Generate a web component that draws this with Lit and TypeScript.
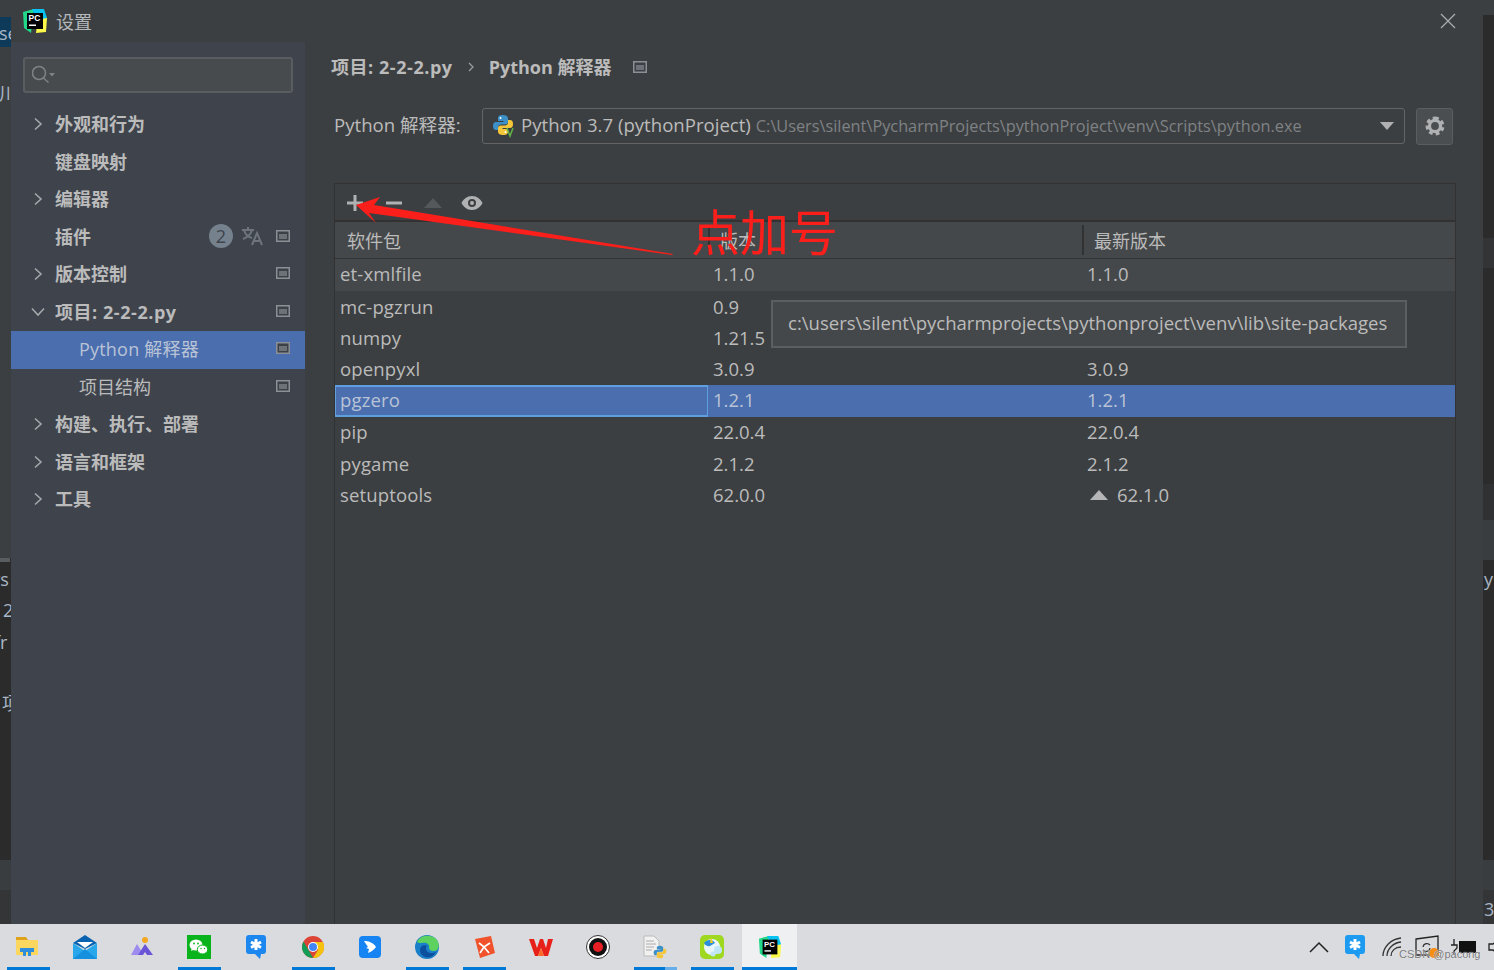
import { LitElement, css, html, svg } from 'lit';
import { customElement } from 'lit/decorators.js';
import { classMap } from 'lit/directives/class-map.js';

const pageIcon = html`<svg class="page-ic" width="14" height="12" viewBox="0 0 14 12"><path fill="#8b9096" d="M0 0h14v12H0z"/><path fill="#3c4047" d="M1.500 1.500h11v9h-11z"/><path fill="#6d7279" d="M3 4h8v5H3z"/></svg>`;

const chevronRight = html`<svg class="chev" width="10" height="14" viewBox="0 0 10 14"><path d="M2 1.500 8 7l-6 5.500" fill="none" stroke="#a4a8ab" stroke-width="1.600"/></svg>`;
const chevronDown = html`<svg class="chev down" width="14" height="10" viewBox="0 0 14 10"><path d="M1 1.500 7 8l6-6.500" fill="none" stroke="#a4a8ab" stroke-width="1.600"/></svg>`;

const pcLogo = (size: number) => html`<svg width=${size} height=${size} viewBox="0 0 26 26">
  <path fill="#21d789" d="M1 4 12 1 9 25 2 20z"/>
  <path fill="#fcf84a" d="M14 25 24 24 25 10 16 8z"/>
  <path fill="#07c3f2" d="M10 1 22 1 25 10 15 12z"/>
  <path fill="#000" d="M5 5h16v16H5z"/>
  <path fill="#fff" d="M7 16.500h7v1.500H7z"/>
  <text x="6.500" y="13" font-family="Liberation Sans" font-size="8.500" font-weight="700" fill="#fff">PC</text>
</svg>`;

const pythonLogo = (size: number) => html`<svg width=${size} height=${size} viewBox="0 0 22 22">
  <path fill="#3c8fc7" d="M11 1C7 1 6 2.500 6 4.500V7h5.500v1H4C2 8 1 9.500 1 12s1 4 3 4h2v-2.500C6 11.500 7.500 10.500 9 10.500h4.500c1.300 0 2.500-1 2.500-2.500V4.500C16 2.500 14.500 1 11 1z"/>
  <path fill="#f4c63a" d="M11 21c4 0 5-1.500 5-3.500V15h-5.500v-1H18c2 0 3-1.500 3-4s-1-4-3-4h-2v2.500c0 2-1.500 3-3 3H8.500C7.200 11.500 6 12.500 6 14v3.500C6 19.500 7.500 21 11 21z"/>
  <circle cx="8.500" cy="4" r="1" fill="#fff"/>
  <circle cx="13.500" cy="18" r="1" fill="#fff"/>
</svg>`;

type TaskIcon = { icon: unknown; bar?: boolean; active?: boolean; split?: boolean };

const taskIcons: TaskIcon[] = [
  {
    bar: true,
    icon: html`<svg width="23" height="20" viewBox="0 0 23 20"><path fill="#e0a21b" d="M0 0h10l2 3H0z"/><path fill="#fbd75f" d="M0 3h22v15H0z"/><path fill="#2f8fdc" d="M4 11h14v4h-3v4h-3v-4h-2v4H7v-4H4z" /></svg>`,
  },
  {
    icon: html`<svg width="24" height="24" viewBox="0 0 24 24"><path fill="#0a63b0" d="M0 8 12 0l12 8-12 6z"/><path fill="#fff" d="M4 7h16l-8 6z"/><path fill="#28a8ea" d="M0 8l12 8 12-8v16H0z"/><path fill="#1490df" d="M0 24 12 14l12 10z"/></svg>`,
  },
  {
    icon: html`<svg width="24" height="20" viewBox="0 0 24 20"><circle cx="15" cy="3" r="3" fill="#f5a623"/><path fill="#9d8bee" d="M1 18 7 7l5 8-3 3z"/><path fill="#6a55d8" d="M8 18l7-11 8 11h-6l-2-3-2 3z"/></svg>`,
  },
  {
    bar: true,
    icon: html`<svg width="24" height="24" viewBox="0 0 24 24"><path fill="#09b31c" d="M0 0h24v24H0z"/><ellipse cx="9" cy="10" rx="6.500" ry="5.500" fill="#fff"/><path fill="#fff" d="M5 13l-1 3 4-2z"/><ellipse cx="15.500" cy="14.500" rx="5.200" ry="4.500" fill="#fff" stroke="#09b31c"/><circle cx="7" cy="8.500" r=".9" fill="#09b31c"/><circle cx="11" cy="8.500" r=".9" fill="#09b31c"/><circle cx="14" cy="13.500" r=".7" fill="#09b31c"/><circle cx="17.500" cy="13.500" r=".7" fill="#09b31c"/></svg>`,
  },
  {
    icon: html`<svg width="20" height="24" viewBox="0 0 20 24"><path fill="#1d87f0" d="M3 0h14a3 3 0 0 1 3 3v13a3 3 0 0 1-3 3h-2l-1 5-5-5H3a3 3 0 0 1-3-3V3a3 3 0 0 1 3-3z"/><path stroke="#fff" stroke-width="3" d="M10 4v11M5 7l10 5.500M15 7 5 12.500"/></svg>`,
  },
  {
    bar: true,
    icon: html`<svg width="22" height="22" viewBox="0 0 22 22"><circle cx="11" cy="11" r="11" fill="#db4437"/><path fill="#0f9d58" d="M1.500 5.500 7 15l4 7A11 11 0 0 1 1.500 5.500z"/><path fill="#f4c20d" d="M11 6h10a11 11 0 0 1-10 16l5-8z"/><circle cx="11" cy="11" r="5" fill="#fff"/><circle cx="11" cy="11" r="4" fill="#4285f4"/></svg>`,
  },
  {
    icon: html`<svg width="22" height="22" viewBox="0 0 22 22"><rect width="22" height="22" rx="4" fill="#1684f2"/><path fill="#fff" d="M5 5c4 0 9 1 12 6-2 3-5 5-8 6l1-4-3-1 2-1z"/></svg>`,
  },
  {
    bar: true,
    icon: html`<svg width="24" height="24" viewBox="0 0 24 24"><circle cx="12" cy="12" r="12" fill="#1a7fc9"/><path fill="#5ed25e" d="M2 7C5 0 14-1 20 3c4 3 5 9 2 12-3 2-8 1-8-2 1-4-3-6-7-5-2 0-4 0-5-1z"/><path fill="#0c4f9e" d="M5 15c0-4 4-6 7-4-2 2-1 6 3 7 2 0 4 0 6-1-3 6-10 7-14 3-1-1-2-3-2-5z"/></svg>`,
  },
  {
    bar: true,
    icon: html`<svg width="22" height="22" viewBox="0 0 22 22"><path fill="#f0532b" d="M2 3 18 0l4 17-15 5z"/><path stroke="#fff" stroke-width="1.700" fill="none" d="M6 7l5 4 6-4M11 11l-4 6M11 11l5 6"/></svg>`,
  },
  {
    icon: html`<svg width="24" height="18" viewBox="0 0 24 18"><path fill="#e8201a" d="M0 1h5l3 9 3-9h3l3 9 2-9h5l-5 17h-4l-3-8-3 8H6z"/><path fill="#ff6a2a" d="M9 18l3-8 3 8z"/></svg>`,
  },
  {
    icon: html`<svg width="24" height="24" viewBox="0 0 24 24"><circle cx="12" cy="12" r="11.500" fill="#fff" stroke="#333" stroke-width="1"/><circle cx="12" cy="12" r="9" fill="#111"/><circle cx="12" cy="12" r="5" fill="#e81e25"/></svg>`,
  },
  {
    bar: true,
    split: true,
    icon: html`<svg width="24" height="24" viewBox="0 0 24 24"><path fill="#f1f1f1" stroke="#bbb" d="M1 1h10l5 5v15H1z"/><path stroke="#aaa" d="M3 6h8M3 9h10M3 12h8M3 15h6"/><svg x="10" y="10" width="14" height="14" viewBox="0 0 22 22"><path fill="#3c8fc7" d="M11 1C7 1 6 2.500 6 4.500V7h5.500v1H4C2 8 1 9.500 1 12s1 4 3 4h2v-2.500C6 11.500 7.500 10.500 9 10.500h4.500c1.300 0 2.500-1 2.500-2.500V4.500C16 2.500 14.500 1 11 1z"/><path fill="#f4c63a" d="M11 21c4 0 5-1.500 5-3.500V15h-5.500v-1H18c2 0 3-1.500 3-4s-1-4-3-4h-2v2.500c0 2-1.500 3-3 3H8.500C7.200 11.500 6 12.500 6 14v3.500C6 19.500 7.500 21 11 21z"/></svg></svg>`,
  },
  {
    bar: true,
    icon: html`<svg width="24" height="24" viewBox="0 0 24 24"><rect width="24" height="24" rx="5" fill="#9fd821"/><circle cx="12" cy="12" r="8" fill="#e8f6fb"/><path fill="#2a8fd8" d="M4 8c3-4 9-4 11 0l-5 3c-2 1-5-1-6-3z"/><path fill="#f3c921" d="M11 2l2 6-3 0z"/><circle cx="18" cy="15" r="4" fill="#bfe6f4"/><circle cx="13" cy="19" r="2.500" fill="#bfe6f4"/></svg>`,
  },
  { bar: true, active: true, icon: pcLogo(24) },
];

const tree = [
  { label: '外观和行为', chevron: 'right', bold: true },
  { label: '键盘映射', bold: true },
  { label: '编辑器', chevron: 'right', bold: true },
  { label: '插件', bold: true, plugins: true, page: true },
  { label: '版本控制', chevron: 'right', bold: true, page: true },
  { label: '项目: 2-2-2.py', chevron: 'down', bold: true, page: true, wide: true },
  { label: 'Python 解释器', sub: true, selected: true, page: true },
  { label: '项目结构', sub: true, page: true },
  { label: '构建、执行、部署', chevron: 'right', bold: true },
  { label: '语言和框架', chevron: 'right', bold: true },
  { label: '工具', chevron: 'right', bold: true },
];

const packages = [
  ['et-xmlfile', '1.1.0', '1.1.0'],
  ['mc-pgzrun', '0.9', ''],
  ['numpy', '1.21.5', ''],
  ['openpyxl', '3.0.9', '3.0.9'],
  ['pgzero', '1.2.1', '1.2.1'],
  ['pip', '22.0.4', '22.0.4'],
  ['pygame', '2.1.2', '2.1.2'],
  ['setuptools', '62.0.0', '62.1.0'],
];

@customElement('app-root')
export class AppRoot extends LitElement {
  static styles = css`
    :host {
      display: block;
      width: 1494px;
      height: 970px;
      overflow: hidden;
      background: #2b2b2b;
      font-family: 'Open Sans', 'Noto Sans CJK SC', sans-serif;
      font-size: 18px;
      color: #bbbbbb;
    }
    .desk {
      display: grid;
      grid-template-columns: 11px 1472px 11px;
      height: 924px;
    }
    .strip {
      position: relative;
      overflow: hidden;
      color: #a9b7c6;
      background: linear-gradient(
        #3c3f41 0 558px,
        #2b2b2b 558px 860px,
        #3a3d3f 860px 890px,
        #333537 890px
      );
    }
    .strip span {
      position: absolute;
      line-height: 22px;
      white-space: nowrap;
    }
    .strip .tab {
      position: absolute;
      left: 0;
      top: 17px;
      width: 11px;
      height: 30px;
      background: #0d3a58;
    }
    .strip .rule {
      position: absolute;
      left: 0;
      top: 558px;
      width: 10px;
      height: 4px;
      background: #5a5d5f;
    }
    .strip.right {
      background: linear-gradient(
        #3c3f41 0 15px,
        #2b2b2b 15px 238px,
        #323436 238px 268px,
        #2b2b2b 268px 484px,
        #2f3133 484px 520px,
        #3a3d3f 520px 560px,
        #2b2b2b 560px 860px,
        #3a3d3f 860px 890px,
        #333537 890px
      );
    }
    .dialog {
      display: flex;
      flex-direction: column;
      background: #3c3f41;
    }
    .title {
      height: 42px;
      flex: none;
      display: flex;
      align-items: center;
      padding: 0 27px 0 11px;
      gap: 8px;
      font-size: 18px;
      color: #b4b8bb;
    }
    .title span {
      flex: 1;
      padding-bottom: 1px;
    }
    .body {
      flex: 1;
      display: flex;
      min-height: 0;
    }
    .side {
      width: 294px;
      flex: none;
      background: #3e434c;
      padding-top: 15px;
      box-sizing: border-box;
    }
    .search {
      height: 32px;
      margin: 0 12px 13px 12px;
      border: 2px solid #5a5d60;
      border-radius: 3px;
      background: #484b4d;
      display: flex;
      align-items: center;
      padding-left: 7px;
    }
    .item {
      height: 37.500px;
      display: flex;
      align-items: center;
      padding: 0 15px 3px 44px;
      box-sizing: border-box;
      position: relative;
      color: #bbbbbb;
    }
    .item.sub {
      padding-left: 68px;
    }
    .item.bold {
      font-weight: 700;
    }
    .item.selected {
      background: #4b6eaf;
      color: #b9c3d6;
    }
    .item.selected .label {
      letter-spacing: 0.2px;
    }
    .item .label {
      flex: 1;
    }
    .item .label.wide,
    .crumbs .wide {
      letter-spacing: 0.55px;
    }
    .item .chev {
      position: absolute;
      left: 22px;
      top: 11px;
    }
    .item .chev.down {
      left: 20px;
      top: 13px;
    }
    .badge {
      width: 24px;
      height: 24px;
      border-radius: 12px;
      background: #76818e;
      color: #3e434c;
      font-size: 18px;
      font-weight: 400;
      line-height: 24px;
      text-align: center;
      margin-right: 9px;
    }
    .lang {
      margin-right: 12px;
    }
    .page-ic {
      display: block;
      flex: none;
    }
    .main {
      flex: 1;
      min-width: 0;
      padding: 0 30px 0 29px;
      display: flex;
      flex-direction: column;
    }
    .crumbs {
      height: 49px;
      display: flex;
      align-items: center;
      font-weight: 700;
      margin-left: -3px;
      flex: none;
    }
    .crumbs > span {
      padding-bottom: 2px;
    }
    .crumbs .sep {
      margin: 0 15px 0 15px;
    }
    .crumbs .page-ic {
      margin-left: 22px;
    }
    .interp {
      display: flex;
      align-items: center;
      margin-top: 17px;
      height: 36px;
      flex: none;
    }
    .interp label {
      width: 148px;
      flex: none;
      font-size: 18.600px;
      padding-bottom: 5px;
    }
    .select {
      flex: 1;
      min-width: 0;
      height: 36px;
      box-sizing: border-box;
      border: 1px solid #646464;
      border-radius: 3px;
      display: flex;
      align-items: center;
      padding: 0 10px 0 9px;
      gap: 5px;
      white-space: nowrap;
      font-size: 18.600px;
    }
    .select .name {
      padding-bottom: 3px;
    }
    .select .path {
      font-size: 16.300px;
      color: #7f8285;
      flex: 1;
      overflow: hidden;
    }
    .gear {
      width: 37px;
      height: 37px;
      margin-left: 11px;
      box-sizing: border-box;
      flex: none;
      border: 1px solid #5a5e60;
      border-radius: 3px;
      background: #4a4e50;
      display: flex;
      align-items: center;
      justify-content: center;
    }
    .table {
      flex: 1;
      margin: 39px -3px 0 0;
      border: solid #323232;
      border-width: 1px 1px 0 1px;
      display: flex;
      flex-direction: column;
      min-height: 0;
    }
    .tools {
      height: 38px;
      flex: none;
      display: flex;
      align-items: center;
      padding: 2px 0 0 12px;
      gap: 13px;
      border-bottom: 2px solid #323232;
      box-sizing: border-box;
    }
    .row {
      display: grid;
      grid-template-columns: 373px 374px 1fr;
      height: 31.400px;
      line-height: 26px;
      font-size: 18.500px;
    }
    .row > div {
      padding-left: 5px;
      display: flex;
      align-items: center;
      gap: 8px;
      box-sizing: border-box;
      white-space: nowrap;
    }
    .row > div:first-child {
      letter-spacing: 0.15px;
    }
    .row.head {
      height: 37px;
      background: #45484a;
      border-bottom: 1px solid #323232;
      box-sizing: border-box;
      font-size: 18px;
    }
    .row.head > div {
      padding-left: 12px;
      padding-top: 1px;
      letter-spacing: 0;
    }
    .row.head > div + div {
      border-left: 2px solid #323232;
      margin: 3px 0;
      padding-left: 10px;
    }
    .row.hover {
      background: #45484a;
      height: 32px;
    }
    .row.hover > div {
      padding-bottom: 2px;
    }
    .row.picked {
      background: #4b6eaf;
      color: #b9c3d6;
    }
    .row.picked > div {
      padding-bottom: 1px;
    }
    .row.picked > div:first-child {
      border: solid #5f9fe0;
      border-width: 2px 1px;
      padding: 0 0 1px 4px;
    }
    .up {
      margin-left: 2px;
    }
    .tip {
      position: absolute;
      left: 771px;
      top: 300px;
      width: 636px;
      height: 48px;
      box-sizing: border-box;
      border: 2px solid #5c5e60;
      background: #45484a;
      color: #bbbbbb;
      font-size: 18.550px;
      line-height: 42px;
      padding-left: 15px;
      white-space: nowrap;
    }
    .note {
      position: absolute;
      left: 691px;
      top: 199px;
      font-size: 49px;
      line-height: 62px;
      color: #fb1f1b;
      font-family: 'Noto Sans CJK SC', sans-serif;
      font-weight: 400;
      white-space: nowrap;
    }
    .arrow {
      position: absolute;
      left: 350px;
      top: 190px;
      pointer-events: none;
    }
    .task {
      height: 46px;
      background: #dadbde;
      display: flex;
      position: relative;
    }
    .apps {
      display: flex;
      flex: 1;
    }
    .app {
      width: 57px;
      height: 46px;
      display: flex;
      align-items: center;
      justify-content: center;
      position: relative;
      padding: 0 2px 1px 0;
      box-sizing: border-box;
    }
    .app.bar::after {
      content: '';
      position: absolute;
      left: 7px;
      right: 7px;
      bottom: 0;
      height: 3px;
      background: #0078d7;
    }
    .app.split::before {
      content: '';
      position: absolute;
      right: 7px;
      width: 12px;
      bottom: 0;
      height: 3px;
      background: #66aeea;
      z-index: 1;
    }
    .app.active {
      background: #eff0f1;
      width: 55px;
      margin-left: 1px;
      padding-right: 0;
    }
    .app.active::after {
      left: 0;
      right: 0;
    }
    .tray {
      display: flex;
      align-items: center;
      width: 187px;
      flex: none;
      padding-left: 2px;
      box-sizing: border-box;
      overflow: hidden;
    }
    .tray svg {
      flex: none;
    }
    .t-blue {
      margin-left: 16px;
    }
    .t-wifi {
      margin-left: 17px;
    }
    .t-screen {
      margin-left: 13px;
    }
    .t-batt {
      margin-left: 11px;
    }
    .t-vol {
      margin-left: 12px;
    }
    .mark {
      position: absolute;
      left: 1399px;
      top: 22px;
      font-size: 11px;
      line-height: 16px;
      color: #77787b;
      font-family: 'Liberation Sans', sans-serif;
      white-space: nowrap;
      text-shadow: 0 0 1px #fff;
    }
    .dot {
      position: absolute;
      left: 1429px;
      top: 24px;
      width: 10px;
      height: 10px;
      border-radius: 5px;
      background: #f78d12;
    }
  `;

  render() {
    return html`
      <div class="desk">
        <div class="strip">
          <div class="tab"></div>
          <span style="left:-1px;top:22px">se</span>
          <span style="left:-1px;top:82px">川台</span>
          <div class="rule"></div>
          <span style="left:-7px;top:568px">rs</span>
          <span style="left:3px;top:599px">2</span>
          <span style="left:-6px;top:631px">fr</span>
          <span style="left:2px;top:692px">项</span>
        </div>
        ${this.renderDialog()}
        <div class="strip right">
          <span style="left:1px;top:568px">y</span>
          <span style="left:1px;top:898px">3</span>
        </div>
      </div>
      ${this.renderTaskbar()}
      <div class="tip">c:\\users\\silent\\pycharmprojects\\pythonproject\\venv\\lib\\site-packages</div>
      <svg class="arrow" width="330" height="70" viewBox="0 0 330 70">
        <path fill="#fb1f1b" d="M6 15 30 7l-6 8 299 49-1 1-303-42 7 10z"/>
      </svg>
      <div class="note">点加号</div>
    `;
  }

  renderDialog() {
    return html`
      <div class="dialog">
        <div class="title">
          ${pcLogo(26)}
          <span>设置</span>
          <svg width="16" height="16" viewBox="0 0 16 16"><path d="M1 1l14 14M15 1 1 15" stroke="#a9adb0" stroke-width="1.300"/></svg>
        </div>
        <div class="body">
          <div class="side">
            <div class="search">
              <svg width="24" height="20" viewBox="0 0 24 20"><circle cx="7" cy="8" r="6.500" fill="none" stroke="#7e8285" stroke-width="1.500"/><path d="M11.500 13l5 4.500" stroke="#7e8285" stroke-width="1.500"/><path d="M17 8h6l-3 3.500z" fill="#7e8285"/></svg>
            </div>
            ${tree.map((t) => this.renderTreeItem(t))}
          </div>
          ${this.renderMain()}
        </div>
      </div>
    `;
  }

  renderTreeItem(t: any) {
    return html`
      <div class=${classMap({ item: true, bold: !!t.bold, sub: !!t.sub, selected: !!t.selected })}>
        ${t.chevron === 'right' ? chevronRight : ''}
        ${t.chevron === 'down' ? chevronDown : ''}
        <span class=${classMap({ label: true, wide: !!t.wide })}>${t.label}</span>
        ${t.plugins
          ? html`<span class="badge">2</span>
              <svg class="lang" width="22" height="20" viewBox="0 0 22 20">
                <path fill="none" stroke="#6e747b" stroke-width="2" d="M0 4h12M6 1v3M2 4c1 4 4 7 8 8M10 4c-1 4-4 7-9 9M10 19l5-12 5 12M12 15h6"/>
              </svg>`
          : ''}
        ${t.page ? pageIcon : ''}
      </div>
    `;
  }

  renderMain() {
    return html`
      <div class="main">
        <div class="crumbs">
          <span class="wide">项目: 2-2-2.py</span>
          <svg class="sep" width="6" height="10" viewBox="0 0 6 10"><path d="M1 1l4 4-4 4" fill="none" stroke="#9a9ea1" stroke-width="1.300"/></svg>
          <span>Python 解释器</span>
          ${pageIcon}
        </div>
        <div class="interp">
          <label>Python 解释器:</label>
          <div class="select">
            <svg width="24" height="24" viewBox="0 0 24 24" style="flex:none">
              ${svg`<g>${pythonLogo(22)}</g>`}
              <path d="M15 14l3 8 3-8" fill="none" stroke="#62b543" stroke-width="1.500"/>
            </svg>
            <span class="name">Python 3.7 (pythonProject)</span>
            <span class="path">C:\\Users\\silent\\PycharmProjects\\pythonProject\\venv\\Scripts\\python.exe</span>
            <svg width="14" height="8" viewBox="0 0 14 8"><path d="M0 0h14L7 8z" fill="#afb1b3"/></svg>
          </div>
          <div class="gear">
            <svg width="20" height="20" viewBox="0 0 18 18">
              <path fill="none" stroke="#afb1b3" stroke-width="4" stroke-dasharray="3.100 2.400" d="M9 2.500a6.500 6.500 0 1 1-.01 0"/>
              <circle cx="9" cy="9" r="5" fill="none" stroke="#afb1b3" stroke-width="3"/>
            </svg>
          </div>
        </div>
        <div class="table">
          <div class="tools">
            <svg width="16" height="16" viewBox="0 0 16 16"><path d="M8 0v16M0 8h16" stroke="#afb1b3" stroke-width="3"/></svg>
            <svg width="16" height="16" viewBox="0 0 16 16" style="margin-left:10px"><path d="M0 8h16" stroke="#afb1b3" stroke-width="3"/></svg>
            <svg width="18" height="10" viewBox="0 0 18 10" style="margin-left:9px"><path d="M0 10 9 0l9 10z" fill="#55585a"/></svg>
            <svg width="22" height="16" viewBox="0 0 22 16" style="margin-left:6px"><path fill-rule="evenodd" fill="#afb1b3" d="M11 1c5 0 9 3.500 10.500 7C20 11.500 16 15 11 15S2 11.500.5 8C2 4.500 6 1 11 1zm0 3a4 4 0 1 0 0 8 4 4 0 0 0 0-8z"/><circle cx="11" cy="8" r="2" fill="#afb1b3"/></svg>
          </div>
          <div class="row head">
            <div>软件包</div>
            <div>版本</div>
            <div>最新版本</div>
          </div>
          ${packages.map((p, i) => this.renderRow(p, i))}
        </div>
      </div>
    `;
  }

  renderRow(p: string[], i: number) {
    return html`
      <div class=${classMap({ row: true, hover: i === 0, picked: p[0] === 'pgzero' })}>
        <div>${p[0]}</div>
        <div>${p[1]}</div>
        <div>
          ${p[0] === 'setuptools'
            ? html`<svg class="up" width="20" height="10" viewBox="0 0 20 10"><path d="M1 10 10 0l9 10z" fill="#b4b6b8"/></svg>`
            : ''}
          ${p[2]}
        </div>
      </div>
    `;
  }

  renderTaskbar() {
    return html`
      <div class="task">
        <div class="apps">
          ${taskIcons.map(
            (a) => html`<div class=${classMap({ app: true, bar: !!a.bar, active: !!a.active, split: !!a.split })}>${a.icon}</div>`,
          )}
        </div>
        <div class="tray">
          <svg width="20" height="12" viewBox="0 0 20 12"><path d="M1 11 10 2l9 9" fill="none" stroke="#222" stroke-width="1.500"/></svg>
          <svg class="t-blue" width="20" height="24" viewBox="0 0 20 24"><path fill="#1d9bf0" d="M3 0h14a3 3 0 0 1 3 3v13a3 3 0 0 1-3 3h-2l-1 5-5-5H3a3 3 0 0 1-3-3V3a3 3 0 0 1 3-3z"/><path stroke="#fff" stroke-width="3" d="M10 4v11M5 7l10 5.500M15 7 5 12.500"/></svg>
          <svg class="t-wifi" width="20" height="20" viewBox="0 0 20 20"><path fill="none" stroke="#333" stroke-width="1.300" d="M1 19C1 10 9 2 19 1M5 19c0-7 6-13 14-14M9 19c0-5 4-9 10-9"/></svg>
          <svg class="t-screen" width="24" height="24" viewBox="0 0 24 24"><path fill="none" stroke="#222" stroke-width="1.300" d="M1 4l22-3v19H1z"/><path fill="none" stroke="#333" stroke-width="1.300" d="M8 12a4 4 0 0 1 7-2M15 13a4 4 0 0 1-7 2"/></svg>
          <svg class="t-batt" width="26" height="20" viewBox="0 0 26 20"><path d="M4 2v6M1 8h6v3l-3 3v4" fill="none" stroke="#222" stroke-width="1.300"/><path d="M9 4h17v12H9z" fill="#111"/></svg>
          <svg class="t-vol" width="16" height="18" viewBox="0 0 16 18"><path d="M1 6h4l6-5v16l-6-5H1z" fill="none" stroke="#222" stroke-width="1.300"/></svg>
        </div>
        <div class="dot"></div>
        <div class="mark">CSDN @pacong</div>
      </div>
    `;
  }
}
